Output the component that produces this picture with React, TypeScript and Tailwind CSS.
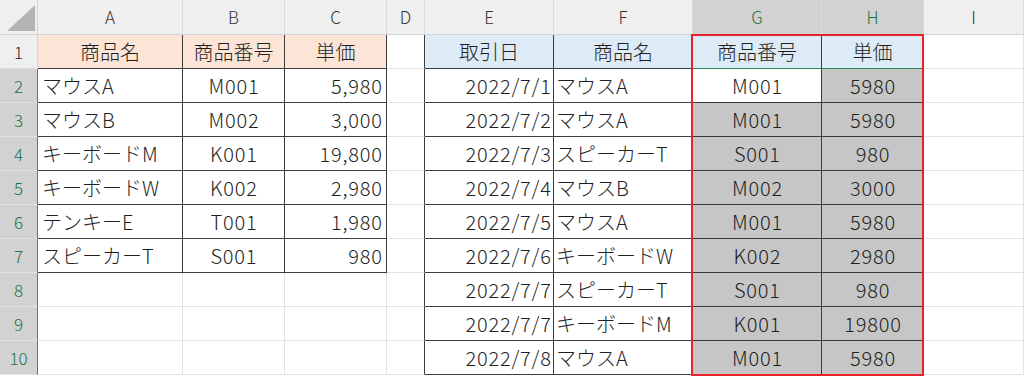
import React from 'react';

const COLS = ['A', 'B', 'C', 'D', 'E', 'F', 'G', 'H', 'I'];

const TABLE1 = [
  ['商品名', '商品番号', '単価'],
  ['マウスA', 'M001', '5,980'],
  ['マウスB', 'M002', '3,000'],
  ['キーボードM', 'K001', '19,800'],
  ['キーボードW', 'K002', '2,980'],
  ['テンキーE', 'T001', '1,980'],
  ['スピーカーT', 'S001', '980'],
];

const TABLE2 = [
  ['取引日', '商品名', '商品番号', '単価'],
  ['2022/7/1', 'マウスA', 'M001', '5980'],
  ['2022/7/2', 'マウスA', 'M001', '5980'],
  ['2022/7/3', 'スピーカーT', 'S001', '980'],
  ['2022/7/4', 'マウスB', 'M002', '3000'],
  ['2022/7/5', 'マウスA', 'M001', '5980'],
  ['2022/7/6', 'キーボードW', 'K002', '2980'],
  ['2022/7/7', 'スピーカーT', 'S001', '980'],
  ['2022/7/7', 'キーボードM', 'K001', '19800'],
  ['2022/7/8', 'マウスA', 'M001', '5980'],
];

const ROWS = [1, 2, 3, 4, 5, 6, 7, 8, 9, 10];

function cellText(r: number, c: number): string {
  if (c <= 2 && r <= 7) return TABLE1[r - 1][c];
  if (c >= 4 && c <= 7) return TABLE2[r - 1][c - 4];
  return '';
}

function Cell({ r, c }: { r: number; c: number }) {
  const inT1 = c <= 2 && r <= 7;
  const inT2 = c >= 4 && c <= 7;
  const selCol = c === 6 || c === 7;
  const text = cellText(r, c);
  // latin-only values run a bit wider in the original font
  const ascii = /^[\x20-\x7e]+$/.test(text);

  // right border
  let right = 'border-r-[#e2e2e2]';
  if (inT1 || inT2 || c === 3) right = 'border-r-[#3c3c3c]';

  // bottom border
  let bottom = 'border-b-[#e2e2e2]';
  if (inT1 || inT2) bottom = 'border-b-[#3c3c3c]';
  if (r === 1 && selCol) bottom = 'border-b-[#2f8553]';

  // background
  let bg = 'bg-white';
  if (r === 1 && inT1) bg = 'bg-[#fce4d6]';
  else if (r === 1 && inT2) bg = 'bg-[#ddebf7]';
  else if (r >= 2 && selCol && !(r === 2 && c === 6)) bg = 'bg-[#c6c6c6]';

  // alignment
  let align = 'justify-center';
  if (r >= 2) {
    if (c === 0 && inT1) align = 'justify-start pl-1';
    if (c === 2 && inT1) align = 'justify-end pr-1';
    if (c === 4) align = 'justify-end pr-0.5';
    if (c === 5) align = 'justify-start pl-0.5';
  }

  return (
    <div className={`flex items-center border-r border-b ${right} ${bottom} ${bg} ${align} overflow-hidden whitespace-nowrap text-[20px] font-light text-[#1f1f1f]`}>
      <span className={ascii ? 'tracking-[0.8px] -mr-[0.8px]' : ''}>{text}</span>
    </div>
  );
}

export default function App() {
  return (
    <div className="relative w-[1024px] h-[376px] overflow-hidden bg-white"
      style={{ fontFamily: '"Noto Sans CJK JP", "Noto Sans", sans-serif' }}>
      <div className="grid grid-cols-[38px_145px_102px_102px_38px_129px_139px_129px_102px_100px] grid-rows-[35px_repeat(10,34px)]">
        {/* corner */}
        <div className="bg-[#efefef] border-r border-b border-r-[#d5d5d5] border-b-[#d5d5d5]">
          <svg width="37" height="34" viewBox="0 0 37 34">
            <polygon points="7,31 35,31 35,5" fill="#b4b4b4" />
          </svg>
        </div>

        {/* column headers */}
        {COLS.map((l, i) => {
          const sel = i === 6 || i === 7;
          return (
            <div key={l}
              className={`flex items-center justify-center border-r border-b border-r-[#dadada] border-b-[#d5d5d5] text-[17px] font-light ${sel ? 'bg-[#d2d2d2] text-[#217346]' : 'bg-[#efefef] text-[#333333]'}`}>
              {l}
            </div>
          );
        })}

        {ROWS.map(r => (
          <React.Fragment key={r}>
            <div className={`flex items-center justify-center border-r border-b text-[17px] font-light ${r === 1
              ? 'bg-[#efefef] text-[#262626] border-r-[#d5d5d5] border-b-[#dcdcdc]'
              : 'bg-[#d2d2d2] text-[#217346] border-r-[#3f8a5a] border-b-[#e2e2e2]'}`}>
              {r}
            </div>
            {COLS.map((_, c) => <Cell key={c} r={r} c={c} />)}
          </React.Fragment>
        ))}
      </div>

      {/* red highlight frame over G1:H10 */}
      <div className="absolute left-[691px] top-[34px] w-[233px] h-[342px] border-2 border-[#e8212b] pointer-events-none" />
    </div>
  );
}
